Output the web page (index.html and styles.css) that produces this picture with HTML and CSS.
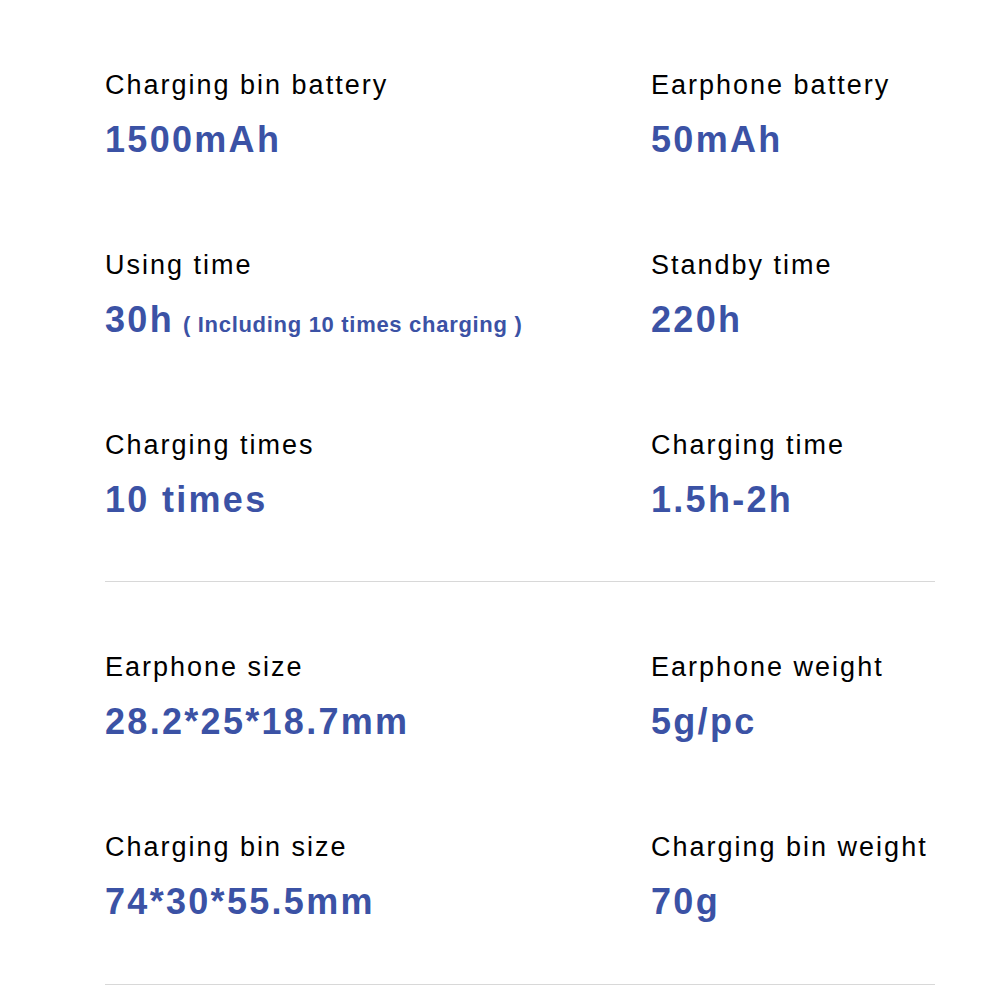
FILE: index.html
```html
<!DOCTYPE html>
<html lang="en">
<head>
<meta charset="utf-8">
<title>Specifications</title>
<link rel="stylesheet" href="styles.css">
</head>
<body>
<main class="specs">
  <section class="spec-group spec-group-power">
    <div class="spec">
      <div class="spec-label">Charging bin battery</div>
      <div class="spec-value">1500mAh</div>
    </div>
    <div class="spec">
      <div class="spec-label">Earphone battery</div>
      <div class="spec-value">50mAh</div>
    </div>
    <div class="spec">
      <div class="spec-label">Using time</div>
      <div class="spec-value">30h<span class="spec-note">( Including 10 times charging )</span></div>
    </div>
    <div class="spec">
      <div class="spec-label">Standby time</div>
      <div class="spec-value">220h</div>
    </div>
    <div class="spec">
      <div class="spec-label">Charging times</div>
      <div class="spec-value">10 times</div>
    </div>
    <div class="spec">
      <div class="spec-label">Charging time</div>
      <div class="spec-value">1.5h-2h</div>
    </div>
  </section>
  <section class="spec-group spec-group-size">
    <div class="spec">
      <div class="spec-label">Earphone size</div>
      <div class="spec-value">28.2*25*18.7mm</div>
    </div>
    <div class="spec">
      <div class="spec-label">Earphone weight</div>
      <div class="spec-value">5g/pc</div>
    </div>
    <div class="spec">
      <div class="spec-label">Charging bin size</div>
      <div class="spec-value">74*30*55.5mm</div>
    </div>
    <div class="spec">
      <div class="spec-label">Charging bin weight</div>
      <div class="spec-value">70g</div>
    </div>
  </section>
</main>
</body>
</html>
```

FILE: styles.css
```css
html, body {
  margin: 0;
  padding: 0;
  background: #ffffff;
}

body {
  font-family: "Liberation Sans", Arial, sans-serif;
}

.specs {
  width: 830px;
  margin-left: 105px;
}

.spec-group {
  display: grid;
  grid-template-columns: 546px 1fr;
  row-gap: 90px;
  border-bottom: 1px solid #d8d8d8;
}

.spec-group-power {
  padding: 70px 0 61px;
}

.spec-group-size {
  padding: 70px 0 62px;
}

.spec {
  display: flex;
  flex-direction: column;
  gap: 20px;
}

.spec-label {
  font-size: 27px;
  line-height: 30px;
  letter-spacing: 2px;
  color: #000000;
  white-space: nowrap;
}

.spec-value {
  height: 40px;
  font-size: 36px;
  line-height: 40px;
  font-weight: bold;
  letter-spacing: 2.3px;
  color: #3b52a5;
  white-space: nowrap;
}

.spec-note {
  font-size: 22px;
  line-height: 20px;
  letter-spacing: 0.7px;
  margin-left: 9px;
}
```
